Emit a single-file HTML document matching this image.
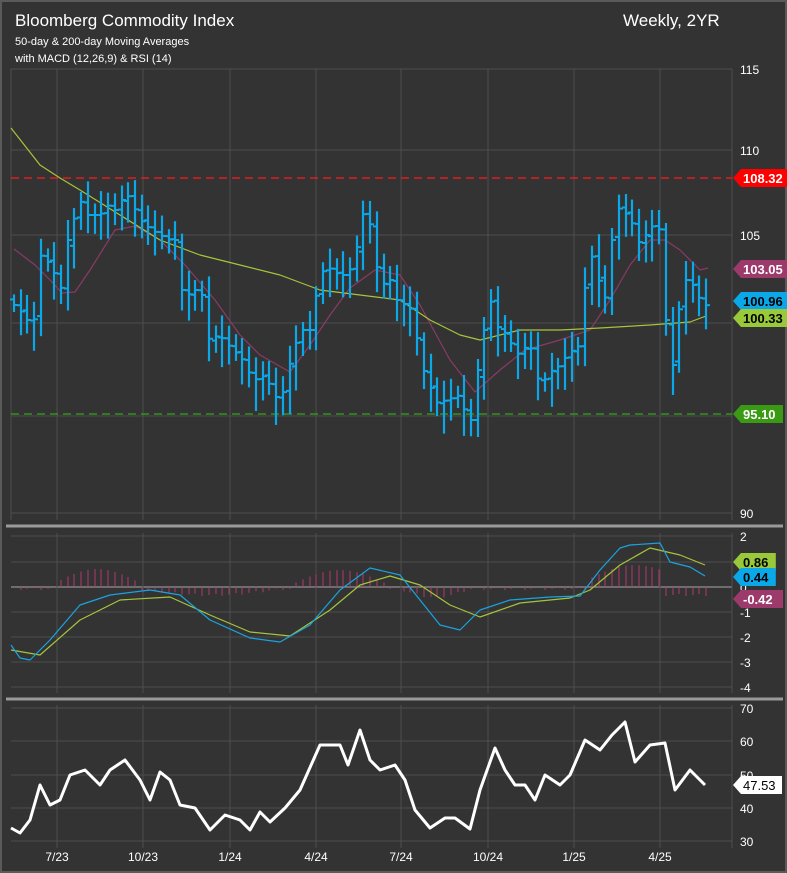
<!DOCTYPE html>
<html><head><meta charset="utf-8"><style>
html,body{margin:0;padding:0;background:#333;}
body{width:787px;height:873px;overflow:hidden;position:relative;font-family:"Liberation Sans",sans-serif;}
#frame{position:absolute;left:0;top:0;width:783px;height:869px;border:2px solid #5a5a5a;background:#333;}
.t{position:absolute;color:#fff;}
</style></head><body>
<div id="frame"></div>
<div class="t" style="left:15px;top:11px;font-size:17px;">Bloomberg Commodity Index</div>
<div class="t" style="left:15px;top:36px;font-size:11px;">50-day &amp; 200-day Moving Averages</div>
<div class="t" style="left:15px;top:53px;font-size:11px;">with MACD (12,26,9) &amp; RSI (14)</div>
<div class="t" style="left:623px;top:11px;font-size:17px;">Weekly, 2YR</div>
<svg id="s" width="787" height="873" style="position:absolute;left:0;top:0" font-family="Liberation Sans, sans-serif"></svg>
<script>
var S=document.getElementById('s'),h='';
function L(x1,y1,x2,y2,c,w,d){h+='<line x1="'+x1+'" y1="'+y1+'" x2="'+x2+'" y2="'+y2+'" stroke="'+c+'" stroke-width="'+(w||1)+'"'+(d?' stroke-dasharray="'+d+'"':'')+'/>';}
function T(x,y,s,c,sz,a){h+='<text x="'+x+'" y="'+y+'" fill="'+c+'" font-size="'+(sz||12)+'"'+(a?' text-anchor="'+a+'"':'')+'>'+s+'</text>';}
function P(pts,c,w){var d='';for(var i=0;i<pts.length;i+=2)d+=(i?'L':'M')+pts[i]+' '+pts[i+1];h+='<path d="'+d+'" fill="none" stroke="'+c+'" stroke-width="'+w+'" stroke-linejoin="round"/>';}
function interp(pts,x){for(var i=0;i<pts.length-2;i+=2){if(x<=pts[i+2]){var t=(x-pts[i])/(pts[i+2]-pts[i]);return pts[i+1]+t*(pts[i+3]-pts[i+1]);}}return pts[pts.length-1];}
var VX=[57,143,230,316,401,488,574,660];
var gc='#4e4e4e';
[69,150,235,323,416,513].forEach(function(y){L(11,y,732,y,gc);});
VX.forEach(function(x){L(x,69,x,520,gc);});
L(732,69,732,520,gc);L(11,69,11,520,gc);
[['115',69],['110',150],['105',235],['90',513]].forEach(function(a){T(740,a[1]+5,a[0],'#fff',12);});
L(11,178,732,178,'#ff1a1a',1.3,'8,5');
L(11,414,732,414,'#33a61a',1.3,'8,5');
var G=[11,128,40,165,60,178,80,190,120,215,160,240,200,255,240,265,280,275,320,290,360,295,400,300,430,320,460,335,480,340,520,330,560,330,600,328,650,325,690,322,706,316];
var R=[14,249,35,265,50,280,62,293,75,292,90,270,115,230,135,226,160,240,185,265,215,300,240,335,260,355,290,372,310,345,330,315,350,288,375,270,400,275,420,305,450,360,475,392,500,370,525,350,560,340,590,330,610,300,630,265,650,240,665,240,680,250,700,270,708,268];
P(R,'#8a3a66',1.2);P(G,'#a6c43a',1.2);
var C=[14,305,20,310,27,320,33,330,40,255,47,260,55,275,62,290,68,240,75,215,80,200,88,215,100,215,107,205,115,210,122,200,130,195,137,215,145,225,152,230,160,235,170,240,175,240,182,290,188,295,195,290,202,295,210,345,217,335,225,340,232,350,240,355,247,370,255,380,262,375,270,385,280,405,287,375,295,345,302,330,310,330,317,290,325,265,332,270,340,275,347,275,355,260,362,215,368,210,375,260,382,285,390,280,397,300,405,305,412,310,420,355,425,375,432,390,438,405,445,400,452,398,460,395,467,420,473,420,480,350,487,315,493,295,500,340,507,330,513,350,520,355,527,345,533,350,540,390,547,375,553,370,560,365,567,355,573,350,580,345,587,265,593,255,600,285,606,300,613,230,620,205,627,215,633,225,640,245,646,235,653,225,660,230,667,335,673,365,680,300,686,280,693,285,700,300,707,306];
var bars=[];for(var i=0;i<104;i++){var x=Math.round(14+i*6.72);if(x>708)break;bars.push(x);}
bars.forEach(function(x,i){var c=interp(C,x),o=interp(C,x-6.7);var r=10+((i*37)%23);var hi=Math.min(c,o)-r*0.5-((i*13)%9),lo=Math.max(c,o)+r*0.7+((i*7)%11);
if(i==98)lo=395;
L(x,hi,x,lo,'#0aa8e8',2.2);L(x-4,o,x,o,'#0aa8e8',2);L(x,c,x+4,c,'#0aa8e8',2);});
function tag(y,txt,bg,fg,x){x=x||735;var w=txt.length*7.2+6;h+='<path d="M'+x+' '+y+' L'+(x+8)+' '+(y-9)+' L'+(x+8+w)+' '+(y-9)+' L'+(x+8+w)+' '+(y+9)+' L'+(x+8)+' '+(y+9)+'Z" fill="'+bg+'"/>';h+='<text x="'+(x+10)+'" y="'+(y+5)+'" fill="'+fg+'" font-size="13" font-weight="bold">'+txt+'</text>';}
tag(178,'108.32','#f00','#fff',733);tag(269,'103.05','#9b3a6b','#fff',733);tag(301,'100.96','#0aa8e8','#000',733);tag(318,'100.33','#99c93a','#000',733);tag(414,'95.10','#3a9a14','#fff',733);
L(6,526,783,526,'#9a9a9a',3);L(6,699,783,699,'#9a9a9a',3);
var mt=[536,562,587,612,637,662,687];
mt.forEach(function(y){L(11,y,732,y,y==587?'#aaa':gc);});
VX.forEach(function(x){L(x,533,x,693,gc);});L(732,533,732,693,gc);
['2','1','0','-1','-2','-3','-4'].forEach(function(s,i){if(s=='1')return;T(740,mt[i]+5,s,'#fff',12);});
bars.forEach(function(x,i){var v;if(x>55&&x<140)v=-4-14*Math.sin((x-55)/85*Math.PI);else if(x>295&&x<385)v=-4-13*Math.sin((x-295)/90*Math.PI);else if(x>585&&x<665)v=-6-16*Math.sin((x-585)/100*Math.PI);else v=((i*5)%3)+1+(x>400&&x<470?8*Math.sin((x-400)/70*Math.PI):0)+(x>140&&x<280?6*Math.sin((x-140)/140*Math.PI):0)+(x>665?6:0);L(x,587,x,587+v,'#b0396e',1);});
var MB=[11,645,20,658,30,660,50,640,80,605,110,595,150,590,180,595,210,620,250,638,280,642,310,625,340,590,370,568,400,575,420,600,440,625,460,630,480,610,510,600,550,597,580,596,600,570,620,548,630,545,660,543,670,562,690,567,705,576];
var MS=[11,650,40,655,80,620,120,600,170,597,210,615,250,632,290,636,330,610,360,585,390,576,420,585,450,605,480,617,520,603,570,598,590,590,620,565,650,548,680,555,705,565];
P(MS,'#a6c43a',1.2);P(MB,'#1aa3e0',1.2);
tag(562,'0.86','#99c93a','#000',733);tag(577,'0.44','#0aa8e8','#000',733);tag(599,'-0.42','#9b3a6b','#fff',733);
var rt=[708,741,775,808,841];
rt.forEach(function(y){L(11,y,732,y,gc);});
VX.forEach(function(x){L(x,705,x,848,gc);});L(732,705,732,848,gc);
['70','60','50','40','30'].forEach(function(s,i){T(740,rt[i]+5,s,'#fff',12);});
var RS=[11,828,20,833,30,820,40,785,50,805,60,800,70,775,85,770,100,785,110,770,125,760,140,780,150,800,160,772,170,780,180,805,195,808,210,830,225,815,240,820,250,830,260,812,270,822,285,808,300,790,320,745,340,745,348,765,360,730,370,760,380,770,395,765,405,780,415,810,430,828,445,818,455,818,470,829,480,790,495,748,505,770,515,785,525,785,535,800,545,775,560,785,570,775,585,740,600,750,612,735,625,722,635,762,650,745,665,743,675,790,690,770,705,785];
P(RS,'#fff',3);
h+='<path d="M733 785 L741 776 L782 776 L782 794 L741 794Z" fill="#fff"/><text x="743" y="790" fill="#000" font-size="13">47.53</text>';
[['7/23',57],['10/23',143],['1/24',230],['4/24',316],['7/24',401],['10/24',488],['1/25',574],['4/25',660]].forEach(function(a){T(a[1],861,a[0],'#fff',12,'middle');});
S.innerHTML=h;
</script>
</body></html>
